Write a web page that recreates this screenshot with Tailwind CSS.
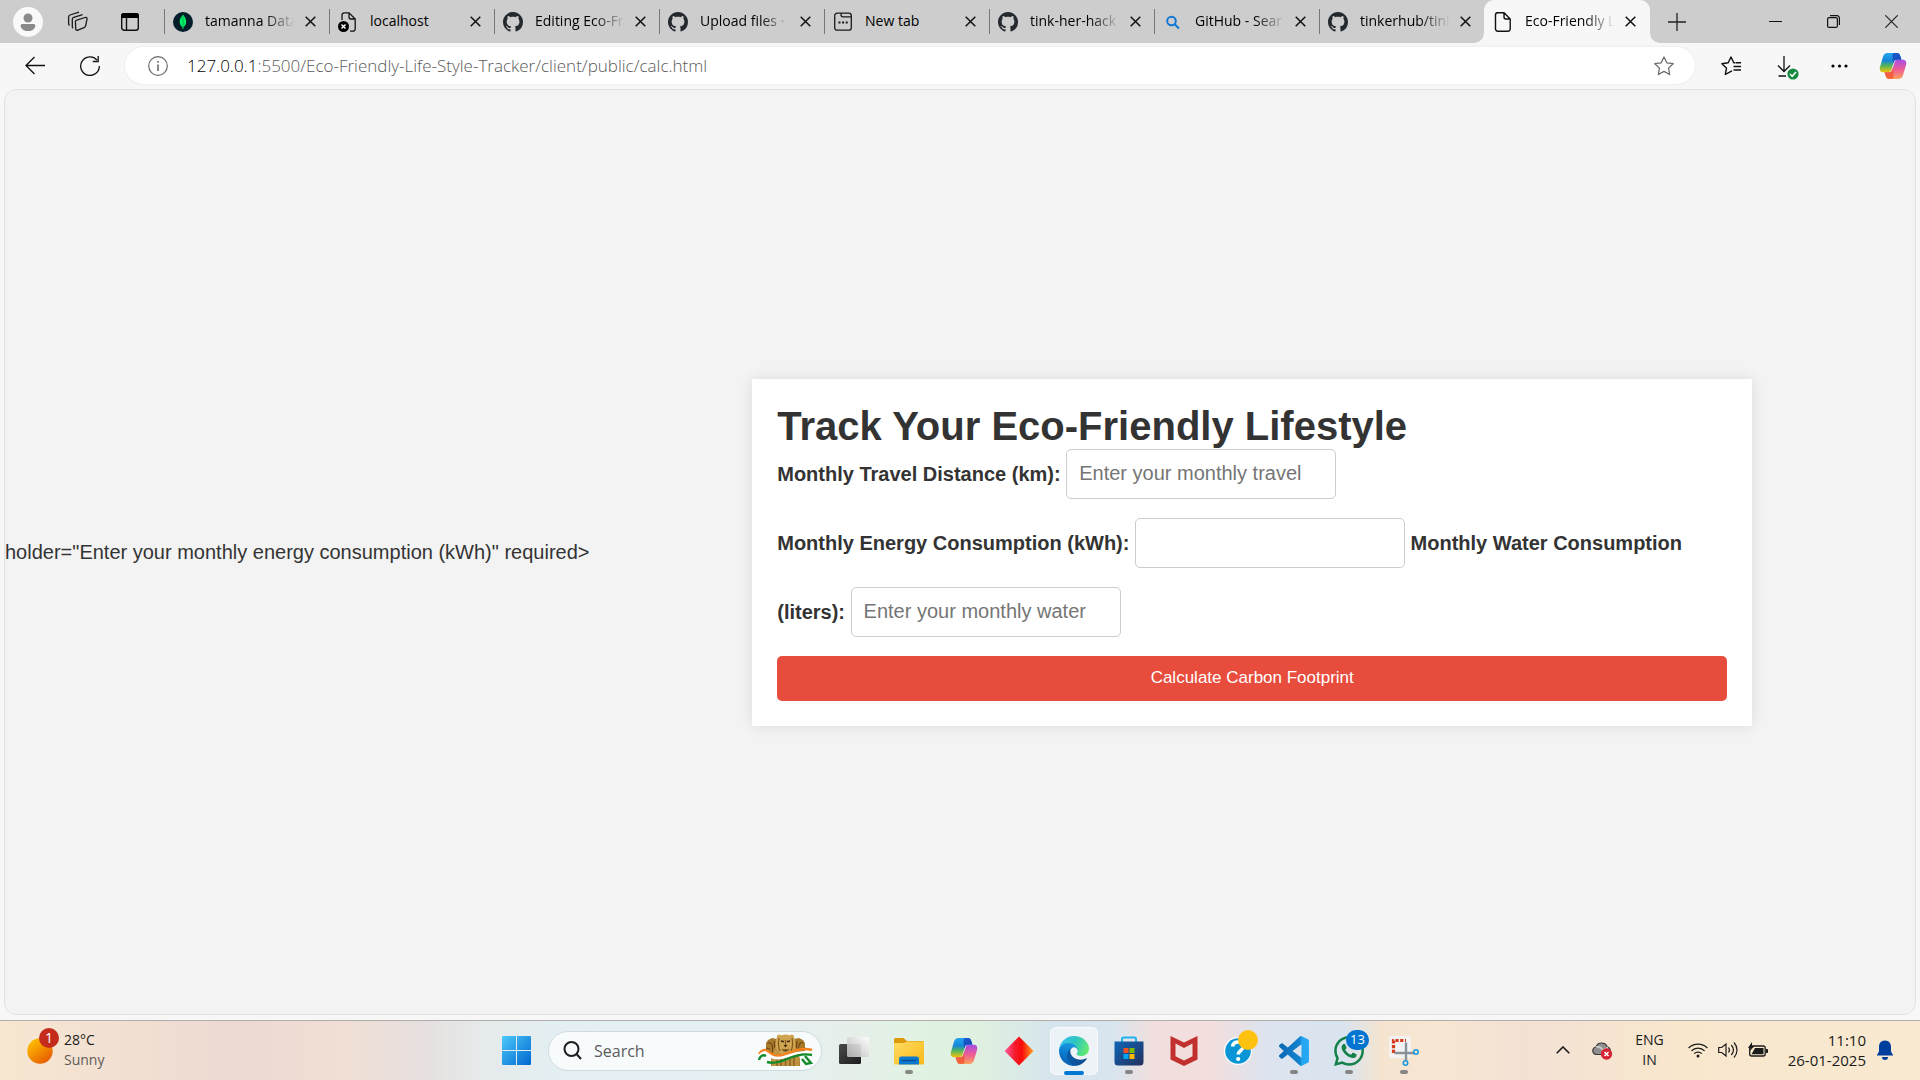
<!DOCTYPE html>
<html lang="en">
<head>
<meta charset="utf-8">
<title>Eco-Friendly Life Style Tracker</title>
<script src="https://cdn.jsdelivr.net/npm/@tailwindcss/browser@4"></script>
</head>
<body class="flex min-h-screen flex-col bg-[#f7f7f7] font-['Open_Sans',sans-serif] text-black">

<!-- shared icons -->
<svg class="absolute size-0" aria-hidden="true">
  <symbol id="github" viewBox="0 0 16 16"><path fill="#24292f" d="M8 0C3.58 0 0 3.58 0 8c0 3.54 2.29 6.53 5.47 7.59.4.07.55-.17.55-.38 0-.19-.01-.82-.01-1.49-2.01.37-2.53-.49-2.69-.94-.09-.23-.48-.94-.82-1.13-.28-.15-.68-.52-.01-.53.63-.01 1.08.58 1.23.82.72 1.21 1.87.87 2.33.66.07-.52.28-.87.51-1.07-1.78-.2-3.64-.89-3.64-3.95 0-.87.31-1.59.82-2.15-.08-.2-.36-1.02.08-2.12 0 0 .67-.21 2.2.82.64-.18 1.32-.27 2-.27s1.36.09 2 .27c1.53-1.04 2.2-.82 2.2-.82.44 1.1.16 1.92.08 2.12.51.56.82 1.27.82 2.15 0 3.07-1.87 3.75-3.65 3.95.29.25.54.73.54 1.48 0 1.07-.01 1.93-.01 2.2 0 .21.15.46.55.38A8.01 8.01 0 0 0 16 8c0-4.42-3.58-8-8-8z"/></symbol>
  <symbol id="x" viewBox="0 0 11 11"><path d="M.7.7l9.6 9.6M10.3.7L.7 10.3" stroke="#111" stroke-width="1.5" fill="none"/></symbol>
  <symbol id="copilot" viewBox="0 0 28 28">
    <path d="M8.500 1h9.500c1.800 0 2.600.9 3.100 2.500l1.400 4.300h-4.700c-1.600 0-2.500.8-3 2.400l-2.400 7.600c-.6 1.700-1.500 2.400-3.200 2.400H4C1.500 20.200.2 18 .9 15.200L4 4.700C4.800 2.200 6.200 1 8.500 1z" fill="url(#cpA)"/>
    <path d="M15 1h3c1.800 0 2.600.9 3.100 2.500l1.400 4.300h-4.700c-1.600 0-2.500.8-3 2.400l-.5 1.400-1-6.600C13.200 3 13.600 1 15 1z" fill="url(#cpC)"/>
    <path d="M19.500 27H10c-1.800 0-2.600-.9-3.100-2.500l-1.400-4.300h4.700c1.600 0 2.500-.8 3-2.400l2.400-7.600c.6-1.700 1.500-2.400 3.200-2.400H24c2.500 0 3.800 2.200 3.100 5L24 23.300c-.8 2.500-2.200 3.700-4.500 3.700z" fill="url(#cpB)"/>
    <path d="M12 27h-2c-1.800 0-2.600-.9-3.100-2.500l-1.400-4.300h4.700c1.600 0 2.500-.8 3-2.400l.8-2.400.6 7.100c.2 3-.8 4.500-2.600 4.500z" fill="#f2542d" opacity=".75"/>
  </symbol>
  <defs>
    <linearGradient id="cpA" x1="0" y1="0" x2="0" y2="1"><stop stop-color="#22a7f0"/><stop offset=".4" stop-color="#1686d9"/><stop offset=".65" stop-color="#4fb45f"/><stop offset="1" stop-color="#f1c40a"/></linearGradient>
    <linearGradient id="cpB" x1="0" y1="0" x2="0" y2="1"><stop stop-color="#a64de6"/><stop offset=".5" stop-color="#ee5c93"/><stop offset="1" stop-color="#fba35e"/></linearGradient>
    <linearGradient id="cpC" x1="0" y1="0" x2="1" y2="1"><stop stop-color="#1a5fd0"/><stop offset="1" stop-color="#1540b0"/></linearGradient>
  </defs>
</svg>

<!-- tab strip -->
<header class="flex h-[43px] items-stretch bg-[#cdcdcd] text-sm">
  <div class="flex w-[164px] shrink-0 items-center pl-[13px]">
    <button aria-label="Profile" class="flex size-[30px] items-center justify-center rounded-full bg-[#f9f9f9]">
      <svg class="size-[18px]" viewBox="0 0 18 18" fill="#8a8a8a"><circle cx="9" cy="5" r="4.500"/><path d="M3.500 11h11c1.200 0 1.800.7 1.800 1.700C16.300 15.600 13.200 18 9 18s-7.300-2.400-7.300-5.300c0-1 .6-1.700 1.800-1.700z"/></svg>
    </button>
    <button aria-label="Workspaces" class="ml-6">
      <svg class="size-[22px]" viewBox="0 0 22 22" fill="none" stroke="#1a1a1a" stroke-width="1.300"><path d="M9.800 9.200l8.200-2.700c1.400-.4 2.300.2 2 1.600l-1.300 6.600c-.2 1-.7 1.600-1.600 1.900l-6.300 2.500c-1.300.5-2.300-.2-2.100-1.500l-.3-7c0-.9.500-1.200 1.400-1.400z"/><path d="M6.200 17.200c-.6-.2-.9-.7-.9-1.500V8.300c0-1 .5-1.600 1.400-1.900l8.900-2.800M2.600 14.300c-.7-.2-1-.7-1-1.500V6c0-1 .5-1.700 1.400-2L12 1.200"/></svg>
    </button>
    <button aria-label="Tab actions" class="ml-8">
      <svg class="size-[18px]" viewBox="0 0 18 18"><rect x=".7" y=".7" width="16.600" height="16.600" rx="2.500" fill="none" stroke="#111" stroke-width="1.400"/><path d="M0 5V2.500A2.500 2.500 0 012.500 0h13A2.500 2.500 0 0118 2.500V5z"/><path d="M5.500 5v12" stroke="#111" stroke-width="1.400"/></svg>
    </button>
  </div>

  <div class="flex w-[165px] items-center pr-[13px]">
    <span class="h-[25px] w-px bg-[#777]"></span>
    <svg class="ml-2 size-5 shrink-0" viewBox="0 0 20 20"><circle cx="10" cy="10" r="10" fill="#021e2b"/><path d="M10 2.500c1.800 2.300 3.200 4.300 3.200 7.200 0 2.600-1.200 4.300-2.900 5.600L10.200 17h-.5l-.2-1.700c-1.600-1.300-2.800-3-2.800-5.600C6.700 6.800 8.300 4.800 10 2.500z" fill="#00ed64"/><path d="M10 3v14" stroke="#04a04a" stroke-width=".7"/></svg>
    <span class="ml-3 min-w-0 flex-1 overflow-hidden pb-0.5 whitespace-nowrap [mask-image:linear-gradient(to_right,black_66%,transparent)]">tamanna Data</span>
    <button aria-label="Close tab" class="ml-[10px]"><svg class="size-[11px]"><use href="#x"/></svg></button>
  </div>
  <div class="flex w-[165px] items-center pr-[13px]">
    <span class="h-[25px] w-px bg-[#777]"></span>
    <svg class="ml-2 size-5 shrink-0" viewBox="0 0 20 20"><path d="M4 8V3a2.200 2.200 0 012.200-2.200H11L17.200 7v10a2.200 2.200 0 01-2.200 2.200h-3M11 1v4a2 2 0 002 2h4" fill="none" stroke="#111" stroke-width="1.300"/><circle cx="5.500" cy="14.500" r="5.500"/><path d="M3.500 12.500l4 4m0-4l-4 4" stroke="#fff" stroke-width="1.400"/></svg>
    <span class="ml-3 min-w-0 flex-1 overflow-hidden pb-0.5 whitespace-nowrap">localhost</span>
    <button aria-label="Close tab" class="ml-[10px]"><svg class="size-[11px]"><use href="#x"/></svg></button>
  </div>
  <div class="flex w-[165px] items-center pr-[13px]">
    <span class="h-[25px] w-px bg-[#777]"></span>
    <svg class="ml-2 size-5 shrink-0"><use href="#github"/></svg>
    <span class="ml-3 min-w-0 flex-1 overflow-hidden pb-0.5 whitespace-nowrap [mask-image:linear-gradient(to_right,black_66%,transparent)]">Editing Eco-Fr</span>
    <button aria-label="Close tab" class="ml-[10px]"><svg class="size-[11px]"><use href="#x"/></svg></button>
  </div>
  <div class="flex w-[165px] items-center pr-[13px]">
    <span class="h-[25px] w-px bg-[#777]"></span>
    <svg class="ml-2 size-5 shrink-0"><use href="#github"/></svg>
    <span class="ml-3 min-w-0 flex-1 overflow-hidden pb-0.5 whitespace-nowrap [mask-image:linear-gradient(to_right,black_66%,transparent)]">Upload files · </span>
    <button aria-label="Close tab" class="ml-[10px]"><svg class="size-[11px]"><use href="#x"/></svg></button>
  </div>
  <div class="flex w-[165px] items-center pr-[13px]">
    <span class="h-[25px] w-px bg-[#777]"></span>
    <svg class="ml-2 size-5 shrink-0" viewBox="0 0 20 20" fill="none" stroke="#1a1a1a" stroke-width="1.300"><rect x="1.700" y="1.200" width="16.600" height="17" rx="2.500"/><path d="M8 1.200v1.600a2 2 0 002 2h8"/><path d="M5.500 10.500h2m1.600 0h2m1.600 0h2" stroke-width="2"/></svg>
    <span class="ml-3 min-w-0 flex-1 overflow-hidden pb-0.5 whitespace-nowrap">New tab</span>
    <button aria-label="Close tab" class="ml-[10px]"><svg class="size-[11px]"><use href="#x"/></svg></button>
  </div>
  <div class="flex w-[165px] items-center pr-[13px]">
    <span class="h-[25px] w-px bg-[#777]"></span>
    <svg class="ml-2 size-5 shrink-0"><use href="#github"/></svg>
    <span class="ml-3 min-w-0 flex-1 overflow-hidden pb-0.5 whitespace-nowrap [mask-image:linear-gradient(to_right,black_66%,transparent)]">tink-her-hack</span>
    <button aria-label="Close tab" class="ml-[10px]"><svg class="size-[11px]"><use href="#x"/></svg></button>
  </div>
  <div class="flex w-[165px] items-center pr-[13px]">
    <span class="h-[25px] w-px bg-[#777]"></span>
    <svg class="ml-2 size-5 shrink-0" viewBox="0 0 20 20" fill="none" stroke="#0f78d4" stroke-width="2"><circle cx="8.500" cy="9" r="4.300"/><path d="M11.700 12.200l4.300 4.300"/></svg>
    <span class="ml-3 min-w-0 flex-1 overflow-hidden pb-0.5 whitespace-nowrap [mask-image:linear-gradient(to_right,black_66%,transparent)]">GitHub - Sear</span>
    <button aria-label="Close tab" class="ml-[10px]"><svg class="size-[11px]"><use href="#x"/></svg></button>
  </div>
  <div class="flex w-[165px] items-center pr-[13px]">
    <span class="h-[25px] w-px bg-[#777]"></span>
    <svg class="ml-2 size-5 shrink-0"><use href="#github"/></svg>
    <span class="ml-3 min-w-0 flex-1 overflow-hidden pb-0.5 whitespace-nowrap [mask-image:linear-gradient(to_right,black_66%,transparent)]">tinkerhub/tinl</span>
    <button aria-label="Close tab" class="ml-[10px]"><svg class="size-[11px]"><use href="#x"/></svg></button>
  </div>
  <div class="relative flex w-[166px] items-center rounded-t-[10px] bg-[#f7f7f7] pr-[14px] pl-[9px]">
    <svg class="absolute bottom-0 -left-[10px] size-[10px]" viewBox="0 0 10 10"><path d="M10 0v10H0A10 10 0 0010 0z" fill="#f7f7f7"/></svg>
    <svg class="absolute -right-[10px] bottom-0 size-[10px]" viewBox="0 0 10 10"><path d="M0 0v10h10A10 10 0 010 0z" fill="#f7f7f7"/></svg>
    <svg class="size-5 shrink-0" viewBox="0 0 20 20" fill="none" stroke="#111" stroke-width="1.400"><path d="M4.500.8H11L17.200 7v10a2.200 2.200 0 01-2.200 2.200H4.700A2.200 2.200 0 012.500 17V3A2.200 2.200 0 014.500.8zM11 1v4a2 2 0 002 2h4"/></svg>
    <span class="ml-3 min-w-0 flex-1 overflow-hidden pb-0.5 whitespace-nowrap [mask-image:linear-gradient(to_right,black_66%,transparent)]">Eco-Friendly L</span>
    <button aria-label="Close tab" class="ml-[10px]"><svg class="size-[11px]"><use href="#x"/></svg></button>
  </div>
  <button aria-label="New tab" class="ml-[18px]"><svg class="size-[18px]" viewBox="0 0 18 18" stroke="#222" stroke-width="1.300"><path d="M9 0v18M0 9h18"/></svg></button>
  <div class="ml-auto flex">
    <button aria-label="Minimize" class="flex w-[58px] items-center justify-center"><svg class="size-[13px]" viewBox="0 0 13 13" stroke="#111"><path d="M0 6.500h13"/></svg></button>
    <button aria-label="Restore" class="flex w-[58px] items-center justify-center"><svg class="size-[13px]" viewBox="0 0 13 13" fill="none" stroke="#111" stroke-width="1.200"><rect x=".6" y="2.600" width="9.800" height="9.800" rx="1.500"/><path d="M3 .6h7a2.400 2.400 0 012.400 2.400v7"/></svg></button>
    <button aria-label="Close" class="flex w-[58px] items-center justify-center"><svg class="size-[13px]" viewBox="0 0 13 13" stroke="#222" stroke-width="1.200"><path d="M.3.300l12.400 12.400M12.700.3L.3 12.700"/></svg></button>
  </div>
</header>

<!-- toolbar -->
<nav class="flex h-[45px] items-center pl-[25px]">
  <button aria-label="Back"><svg class="size-5" viewBox="0 0 20 20" fill="none" stroke="#111" stroke-width="1.300"><path d="M20 9.500H1M9.500 1L1 9.500 9.500 18"/></svg></button>
  <button aria-label="Refresh" class="ml-[35px]"><svg class="size-5" viewBox="0 0 20 20" fill="none" stroke="#111" stroke-width="1.300"><path d="M19.300 10A9.300 9.300 0 1117 4M18.200 0v5.500h-5.500"/></svg></button>
  <div class="ml-[25px] flex h-[37px] flex-1 items-center rounded-full bg-white pr-[21px] pl-[23px] shadow-[0_0_3px_rgba(0,0,0,0.08)]">
    <svg class="size-5 shrink-0" viewBox="0 0 20 20" fill="none" stroke="#6b6b6b" stroke-width="1.200"><circle cx="10" cy="10" r="9.300"/><path d="M10 8.500V15M10 5v1.800" stroke-width="1.600"/></svg>
    <span class="ml-[19px] flex-1 text-[17px] leading-6 font-light whitespace-nowrap text-[#5a5a5a]"><span class="text-black">127.0.0.1</span>:5500/Eco-Friendly-Life-Style-Tracker/client/public/calc.html</span>
    <button aria-label="Add to favorites"><svg class="size-5 shrink-0" viewBox="0 0 20 20" fill="none" stroke="#6b6b6b" stroke-width="1.300" stroke-linejoin="round"><path d="M10 1l2.800 5.800 6.400.9-4.700 4.400 1.200 6.400L10 15.400l-5.700 3.100 1.200-6.400L.8 7.700l6.400-.9z"/></svg></button>
  </div>
  <div class="ml-[9px] flex">
    <button aria-label="Favorites" class="flex w-[54px] items-center justify-center"><svg class="size-5" viewBox="0 0 20 20" fill="none" stroke="#111" stroke-width="1.400" stroke-linejoin="round"><path d="M14 6.800h-1.200L10 1 7.200 6.800l-6.400.9 4.700 4.400-1.200 6.400L10 15.400M12.500 10.500H20M12.500 14H20M14.500 6.800H20M10 15.400l1-.5"/></svg></button>
    <button aria-label="Downloads" class="flex w-[54px] items-center justify-center pl-1"><svg class="h-[26px] w-5 overflow-visible" viewBox="0 0 20 26" fill="none" stroke="#111" stroke-width="1.300"><path d="M7 3v15M1 12.500l6 6 6-6M1.500 23H9"/><circle cx="16" cy="21" r="5.600" fill="#168a3c" stroke="none"/><path d="M13 21l2.200 2.300 3.800-4.200" stroke="#fff" stroke-width="1.500"/></svg></button>
    <button aria-label="Settings and more" class="flex w-[54px] items-center justify-center"><svg class="h-1 w-[17px]" viewBox="0 0 17 4"><circle cx="2" cy="2" r="1.600"/><circle cx="8.500" cy="2" r="1.600"/><circle cx="15" cy="2" r="1.600"/></svg></button>
    <button aria-label="Copilot" class="flex w-[54px] items-center justify-center"><svg class="size-7"><use href="#copilot"/></svg></button>
  </div>
</nav>

<!-- page -->
<main class="mx-1 mt-px mb-[5px] flex flex-1 items-center overflow-hidden rounded-xl border border-[#e2e2e2] bg-[#f3f3f3] font-['Liberation_Sans',Arial,sans-serif] text-xl text-[#333]">
  <p class="whitespace-nowrap">holder="Enter your monthly energy consumption (kWh)" required&gt;</p>
  <section class="mx-auto w-full max-w-[1000px] bg-white p-[25px] shadow-[0_0_13px_rgba(0,0,0,0.1)]">
    <h1 class="text-[40px] leading-[45px] font-bold">Track Your Eco-Friendly Lifestyle</h1>
    <form>
      <label for="travel" class="font-bold">Monthly Travel Distance (km):</label>
      <input id="travel" type="text" placeholder="Enter your monthly travel" class="mb-[19px] h-[50px] w-[270px] rounded-[5px] border border-[#ccc] bg-white px-3 placeholder:text-[#757575]">
      <br>
      <label for="energy" class="font-bold">Monthly Energy Consumption (kWh):</label>
      <input id="energy" type="text" class="mb-[19px] h-[50px] w-[270px] rounded-[5px] border border-[#ccc] bg-white px-3">
      <label for="water" class="font-bold">Monthly Water Consumption (liters):</label>
      <input id="water" type="text" placeholder="Enter your monthly water" class="mb-[19px] h-[50px] w-[270px] rounded-[5px] border border-[#ccc] bg-white px-3 placeholder:text-[#757575]">
      <button type="button" class="block h-[45px] w-full rounded-[5px] bg-[#e74c3c] text-[17px] text-white">Calculate Carbon Footprint</button>
    </form>
  </section>
</main>

<!-- taskbar -->
<footer class="grid h-[60px] grid-cols-[1fr_auto_1fr] border-t border-[#b0aeaa] bg-[linear-gradient(to_right,#f6e7d0_0%,#f2e0d3_6%,#ecdad3_12.500%,#f0dfd4_18%,#e6dfdf_22%,#e6eaea_25%,#e3eff3_29%,#e5f0f3_39%,#e6efea_44%,#e0f2e2_48%,#dff0e0_51%,#d6e4ed_55%,#d9e5ee_58%,#f0dfde_60%,#f3dedd_63%,#dce4ef_66%,#d9e4ef_70%,#f5e4cf_72%,#f7e6d1_75%,#f3e1d5_79.500%,#f8e7cd_87%,#f8e9d0_100%)] text-sm">
  <div class="flex items-center pb-0.5 pl-[27px]">
    <div class="relative h-9 w-9">
      <svg class="absolute top-1.5 left-0 size-[26px]" viewBox="0 0 26 26"><defs><linearGradient id="sun" x1=".1" y1="0" x2=".9" y2="1"><stop stop-color="#ffc800"/><stop offset="1" stop-color="#e65100"/></linearGradient></defs><circle cx="13" cy="13" r="12.700" fill="url(#sun)"/></svg>
      <span class="absolute -top-1 left-3 flex size-5 items-center justify-center rounded-full bg-[#c42b1c] text-sm text-white">1</span>
    </div>
    <div class="ml-px leading-5 text-[#1b1b1b]"><div>28°C</div><div class="text-[#5f5b57]">Sunny</div></div>
  </div>

  <div class="flex items-center">
    <button aria-label="Start" class="flex w-[55px] justify-center"><svg class="size-[29px]" viewBox="0 0 29 29"><defs><linearGradient id="win" x1="0" y1="0" x2="1" y2="1"><stop stop-color="#4cc9fb"/><stop offset="1" stop-color="#0067ce"/></linearGradient></defs><path fill="url(#win)" d="M1 0h13v14H0V1a1 1 0 011-1zM15 0h13a1 1 0 011 1v13H15zM0 15h14v14H1a1 1 0 01-1-1zM15 15h14v13a1 1 0 01-1 1H15z"/></svg></button>
    <label class="mx-1 flex h-10 w-[274px] items-center rounded-full border border-[#d0dbe0] bg-[#f8fbfc] pr-2 pl-[14px]">
      <svg class="size-[19px] shrink-0" viewBox="0 0 19 19" fill="none" stroke="#1f1f1f" stroke-width="2"><circle cx="8.500" cy="8" r="7"/><path d="M13.500 13l4.500 5"/></svg>
      <input type="text" aria-label="Search" placeholder="Search" class="ml-3 w-0 flex-1 bg-transparent text-base placeholder:text-[#5c5c5c]">
      <svg class="h-[33px] w-[55px] shrink-0" viewBox="0 0 55 33">
        <path d="M8 9l2-3 4-2 5 1 3 4v23h-9c0-5 0-8 1-10l-6-4z" fill="#a87a2c"/>
        <path d="M47 9l-2-3-4-2-5 1-3 4v23h9c0-5 0-8-1-10l6-4z" fill="#a87a2c"/>
        <path d="M10 9c2-1 3 0 4 2s0 6 1 9M16 7c1 4 0 9 2 14M45 9c-2-1-3 0-4 2s0 6-1 9M39 7c-1 4 0 9-2 14M8 14l4 1M47 14l-4 1" stroke="#6f4a15" stroke-width="1.200" fill="none"/>
        <path d="M18 12c-4 6-5 13-4 20h27c1-7 0-14-4-20z" fill="#c0913f"/>
        <path d="M19 3c0-3 3-3 4-1.500 3-1.300 6-1.300 9 0C33 0 36 0 36 3c2 4 2 9 0 13-2 3-5 5-8.500 5S21 19 19 16c-2-4-2-9 0-13z" fill="#d0a551"/>
        <path d="M21 4c-1 5-1 9 1 13M34 4c1 5 1 9-1 13M24 15c2 3 5 3 7 0M27.500 6v5M19 23v9M23 25v7M32 25v7M36 23v9M27.500 21v11" stroke="#80591d" stroke-width="1.200" fill="none"/>
        <path d="M23 7l3 .7M32 7l-3 .7" stroke="#3d270a" stroke-width="1.500"/><path d="M25.500 11h4l-2 2.500zM25 15.500h5l-2.500 1.500z" fill="#3d270a"/>
        <path d="M1 20c3-4 5-5 8-3 5 5 11 6 19 3 8-3 17-7 26-4" stroke="#f58220" stroke-width="2.600" fill="none"/>
        <path d="M1 22.500c3-4 5-5 8-3 5 5 11 6 19 3 8-3 17-6 26-3.500" stroke="#fff" stroke-width="2.600" fill="none"/>
        <path d="M1 26c1-4 4-6 7-4M9 28c6 2 13 0 20-3s16-6 25-4M47 22l6 7-5 1-4-5" stroke="#128a2c" stroke-width="2.400" fill="none"/>
      </svg>
    </label>
    <button aria-label="Task view" class="flex w-[55px] justify-center"><svg class="size-[30px]" viewBox="0 0 30 30"><defs><linearGradient id="tv" x1="0" y1="0" x2="1" y2="1"><stop stop-color="#4a4a4a"/><stop offset="1" stop-color="#1c1c1c"/></linearGradient><linearGradient id="tw" x1="1" y1="0" x2="0" y2="1"><stop stop-color="#fff"/><stop offset="1" stop-color="#b5b5b5"/></linearGradient></defs><rect y="8" width="22" height="20" rx="1.500" fill="url(#tv)"/><rect x="8" y="1" width="22" height="20" rx="1.500" fill="url(#tw)" opacity=".92"/></svg></button>
    <button aria-label="File Explorer" class="relative flex w-[55px] justify-center"><svg class="size-[30px]" viewBox="0 0 30 30"><defs><linearGradient id="fo" x1="0" y1="0" x2="1" y2="1"><stop stop-color="#ffdb64"/><stop offset="1" stop-color="#f9b916"/></linearGradient></defs><path d="M0 3.500A1.500 1.500 0 011.500 2h8L13 5h15.500A1.500 1.500 0 0130 6.500V12H0z" fill="#dd9a0b"/><path d="M0 7h10l3-1.500h17V27a1.500 1.500 0 01-1.500 1.500h-27A1.500 1.500 0 010 27z" fill="url(#fo)"/><path d="M5 28.500V23a2.500 2.500 0 012.500-2.500h15A2.500 2.500 0 0125 23v5.500z" fill="#0b78d0"/><path d="M8 24.500h14" stroke="#064a8c" stroke-width="1.300"/></svg><span class="absolute -bottom-2 h-1 w-2 rounded-full bg-[#858a83]"></span></button>
    <button aria-label="Copilot" class="flex w-[55px] justify-center"><svg class="size-7"><use href="#copilot"/></svg></button>
    <button aria-label="Diamond" class="flex w-[55px] justify-center"><svg class="size-[30px]" viewBox="0 0 30 30"><defs><linearGradient id="di"><stop stop-color="#ff5fa0"/><stop offset=".35" stop-color="#f41b30"/><stop offset=".6" stop-color="#fa0a0a"/><stop offset="1" stop-color="#ffa51f"/></linearGradient></defs><path d="M15 .5L29.500 15 15 29.500.5 15z" fill="url(#di)"/></svg></button>
    <button aria-label="Microsoft Edge" class="relative flex h-12 w-[55px] items-center justify-center"><span class="flex size-12 items-center justify-center rounded-md border border-white/60 bg-white/55"><svg class="size-[30px]" viewBox="0 0 256 256"><defs><linearGradient id="e1" x1=".2" y1=".5" x2="1" y2=".5"><stop stop-color="#0c59a4"/><stop offset="1" stop-color="#114a8b"/></linearGradient><linearGradient id="e2" x1=".6" y1="0" x2=".3" y2="1"><stop stop-color="#1b9de2"/><stop offset=".5" stop-color="#0b7cd0"/><stop offset="1" stop-color="#0a5bb0"/></linearGradient><linearGradient id="e3" x1="0" y1=".3" x2="1" y2=".6"><stop stop-color="#35c1f1"/><stop offset=".5" stop-color="#2dc5c0"/><stop offset="1" stop-color="#66eb6e"/></linearGradient></defs><g transform="translate(-4.630 -4.920)"><path fill="url(#e1)" d="M235.680 195.460a93.730 93.730 0 01-10.540 4.710 101.870 101.870 0 01-35.900 6.460c-47.320 0-88.540-32.550-88.540-74.320A31.480 31.480 0 01117.130 105c-42.800 1.800-53.800 46.400-53.800 72.530 0 73.880 68.090 81.370 82.760 81.370 7.910 0 19.840-2.300 27-4.560l1.310-.44a128.340 128.340 0 0066.600-52.800 4 4 0 00-5.320-5.640z"/><path fill="url(#e2)" d="M110.340 246.340A79.200 79.200 0 0187.600 225a80.720 80.720 0 0129.530-120c3.120-1.470 8.450-4.130 15.540-4a32.350 32.350 0 0125.690 13 31.880 31.880 0 016.360 18.660c0-.21 24.460-79.600-80-79.600-43.900 0-80 41.660-80 78.210a130.150 130.150 0 0012.110 56 128 128 0 00156.380 67.110 75.550 75.550 0 01-62.780-8z"/><path fill="url(#e3)" d="M156.940 153.780c-.81 1.050-3.300 2.500-3.300 5.660 0 2.610 1.700 5.120 4.720 7.230 14.380 10 41.490 8.680 41.560 8.680a59.560 59.560 0 0030.270-8.350 61.380 61.380 0 0030.430-52.880c.26-22.410-8-37.310-11.340-43.910-21.190-41.450-66.930-65.290-116.670-65.290a128 128 0 00-128 126.200c.48-36.540 36.800-66.050 80-66.050 3.500 0 23.460.34 42 10.070 16.340 8.580 24.900 18.940 30.850 29.210 6.180 10.670 7.280 24.150 7.280 29.520s-2.740 13.330-7.800 19.910z"/></g></svg></span><span class="absolute bottom-0 h-1 w-5 rounded-full bg-[#0078d4]"></span></button>
    <button aria-label="Microsoft Store" class="relative flex w-[55px] justify-center"><svg class="size-[30px]" viewBox="0 0 30 30"><defs><linearGradient id="st" x1="0" y1="0" x2="1" y2="1"><stop stop-color="#0d66b8"/><stop offset="1" stop-color="#25305c"/></linearGradient></defs><path d="M8 6V3a1.500 1.500 0 011.500-1.500h11A1.500 1.500 0 0122 3v3" fill="none" stroke="#1fb3ee" stroke-width="2"/><path d="M.5 5.500h29V26a3.500 3.500 0 01-3.500 3.500H4A3.500 3.500 0 01.5 26z" fill="url(#st)"/><path fill="#f25022" d="M9.500 12H14.500v5h-5z"/><path fill="#7fba00" d="M15.500 12h5v5h-5z"/><path fill="#00a4ef" d="M9.500 18h5v5h-5z"/><path fill="#ffb900" d="M15.500 18h5v5h-5z"/></svg><span class="absolute -bottom-2 h-1 w-2 rounded-full bg-[#858585]"></span></button>
    <button aria-label="McAfee" class="flex w-[55px] justify-center"><svg class="size-[30px]" viewBox="0 0 30 30"><path fill-rule="evenodd" d="M1.500 0L15 6.500 28.500 0v23.500L15 30 1.500 23.500zM6.500 7.500v12.800L15 24.500l8.500-4.200V7.500L15 12z" fill="#c22f2f"/></svg></button>
    <button aria-label="Help" class="relative flex w-[55px] justify-center"><svg class="size-[30px]" viewBox="0 0 30 30"><circle cx="14" cy="15" r="14" fill="#fff"/><circle cx="14" cy="15" r="12.800" fill="#0a96d6"/><path d="M8.500 10.500C9 7.500 11.300 6 14 6c3 0 5.300 1.600 5.300 4.500 0 3.800-5 4-5 8" fill="none" stroke="#fff" stroke-width="3.500"/><circle cx="14.200" cy="23" r="2.100" fill="#fff"/></svg><span class="absolute -top-1.5 right-2 size-5 rounded-full bg-[#ffc20e]"></span></button>
    <button aria-label="Visual Studio Code" class="relative flex w-[55px] justify-center"><svg class="size-[30px]" viewBox="0 0 24 24"><defs><linearGradient id="vs"><stop offset=".1" stop-color="#0b6cb8"/><stop offset=".7" stop-color="#1383cf"/><stop offset=".76" stop-color="#23a5f0"/><stop offset="1" stop-color="#2aaaf5"/></linearGradient></defs><path fill="url(#vs)" d="M23.150 2.587L18.210.21a1.494 1.494 0 0 0-1.705.29l-9.460 8.630-4.120-3.128a.999.999 0 0 0-1.276.057L.327 7.261A1 1 0 0 0 .326 8.740L3.899 12 .326 15.260a1 1 0 0 0 .001 1.479L1.650 17.940a.999.999 0 0 0 1.276.057l4.120-3.128 9.460 8.630a1.492 1.492 0 0 0 1.704.29l4.942-2.377A1.500 1.500 0 0 0 24 20.060V3.939a1.500 1.500 0 0 0-.85-1.352zm-5.146 14.861L10.826 12l7.178-5.448v10.896z"/></svg><span class="absolute -bottom-2 h-1 w-2 rounded-full bg-[#858585]"></span></button>
    <button aria-label="WhatsApp" class="relative flex w-[55px] justify-center"><svg class="size-[30px]" viewBox="0 0 24 24"><path fill="#14804a" d="M17.472 14.382c-.297-.149-1.758-.867-2.030-.967-.273-.099-.471-.148-.67.150-.197.297-.767.966-.94 1.164-.173.199-.347.223-.644.075-.297-.150-1.255-.463-2.390-1.475-.883-.788-1.480-1.761-1.653-2.059-.173-.297-.018-.458.130-.606.134-.133.298-.347.446-.520.149-.174.198-.298.298-.497.099-.198.050-.371-.025-.520-.075-.149-.669-1.612-.916-2.207-.242-.579-.487-.5-.669-.510-.173-.008-.371-.010-.570-.010-.198 0-.520.074-.792.372-.272.297-1.040 1.016-1.040 2.479 0 1.462 1.065 2.875 1.213 3.074.149.198 2.096 3.200 5.077 4.487.709.306 1.262.489 1.694.625.712.227 1.360.195 1.871.118.571-.085 1.758-.719 2.006-1.413.248-.694.248-1.289.173-1.413-.074-.124-.272-.198-.570-.347m-5.421 7.403h-.004a9.870 9.870 0 01-5.031-1.378l-.361-.214-3.741.982.998-3.648-.235-.374a9.860 9.860 0 01-1.510-5.260c.001-5.450 4.436-9.884 9.888-9.884 2.640 0 5.122 1.030 6.988 2.898a9.825 9.825 0 012.893 6.994c-.003 5.450-4.437 9.884-9.885 9.884m8.413-18.297A11.815 11.815 0 0012.050 0C5.495 0 .16 5.335.157 11.892c0 2.096.547 4.142 1.588 5.945L.057 24l6.305-1.654a11.882 11.882 0 005.683 1.448h.005c6.554 0 11.890-5.335 11.893-11.893a11.821 11.821 0 00-3.480-8.413z"/></svg><span class="absolute -top-1.5 right-[7px] flex h-5 w-[23px] items-center justify-center rounded-full bg-[#0074d1] text-[13px] text-white">13</span><span class="absolute -bottom-2 h-1 w-2 rounded-full bg-[#858585]"></span></button>
    <button aria-label="Snipping Tool" class="relative flex w-[55px] justify-center"><svg class="size-[30px]" viewBox="0 0 30 30"><rect width="22" height="22" rx="2" fill="#f3f3f3"/><path d="M4.500 17V4.500H17" fill="none" stroke="#d83b1a" stroke-width="3.200" stroke-dasharray="3.200 1.600"/><path d="M17 6.500v18M5.500 17h20" stroke="#8a9299" stroke-width="2.400"/><circle cx="16.500" cy="27" r="2.200" fill="none" stroke="#1a9be0" stroke-width="1.600"/><circle cx="27" cy="16" r="2.200" fill="none" stroke="#1a9be0" stroke-width="1.600"/></svg><span class="absolute -bottom-2 h-1 w-2 rounded-full bg-[#858585]"></span></button>
  </div>

  <div class="flex items-center justify-end pr-[27px] pb-0.5 text-[#1b1b1b]">
    <button aria-label="Show hidden icons"><svg class="h-2 w-[14px]" viewBox="0 0 14 8" fill="none" stroke="#1b1b1b" stroke-width="1.600"><path d="M.7 7.300L7 1l6.300 6.300"/></svg></button>
    <svg class="ml-[22px] h-5 w-[21px]" viewBox="0 0 21 20"><path d="M5 14.500C2.500 14.500.8 13 .8 10.700c0-2 1.400-3.400 3.200-3.700C4.800 4.300 7 3 9.500 3c2.800 0 5 1.500 5.700 4 2 .3 3 1.800 3 3.600 0 2.500-1.700 3.900-4 3.900z" fill="#8f8f8f" stroke="#3a3a3a" stroke-width="1.200"/><path d="M4 7c3-.5 5 0 7 3l5-2.500" fill="none" stroke="#ccc" stroke-width="1.500"/><circle cx="14.500" cy="14" r="5.700" fill="#d92332"/><path d="M12.500 12l4 4m0-4l-4 4" stroke="#fff" stroke-width="1.500"/></svg>
    <div class="ml-[22px] text-center leading-5"><div>ENG</div><div>IN</div></div>
    <svg class="ml-6 h-4 w-5" viewBox="0 0 20 16" fill="none" stroke="#1b1b1b" stroke-width="1.300"><path d="M.6 6a13.300 13.300 0 0118.800 0M3.400 8.900a9.300 9.300 0 0113.200 0M6.200 11.600a5.400 5.400 0 017.600 0"/><circle cx="10" cy="14" r="1.500" fill="#1b1b1b" stroke="none"/></svg>
    <svg class="ml-[10px] h-[18px] w-5" viewBox="0 0 20 18" fill="none" stroke="#1b1b1b" stroke-width="1.200"><path d="M.7 6.500h3L8 3v12l-4.300-3.500h-3z"/><path d="M10.500 6.500c1.200 1.500 1.200 3.500 0 5M13.300 4c2.600 3 2.600 7 0 10M16 1.500c4 4.500 4 10.500 0 15"/></svg>
    <svg class="ml-[10px] h-4 w-5" viewBox="0 0 20 16"><rect x="1.700" y="4" width="15.500" height="10" rx="2" fill="none" stroke="#1b1b1b" stroke-width="1.300"/><path d="M7 6h8.500v6.200H3.500zM18 7h1.200a.8.800 0 01.8.800v2.400a.8.800 0 01-.8.800H18zM4 0L0 6h2.500L1.500 9.500 6.500 4H4z" fill="#1b1b1b"/></svg>
    <div class="ml-5 text-right text-[15px] leading-5"><div>11:10</div><div>26-01-2025</div></div>
    <svg class="ml-[11px] h-5 w-4" viewBox="0 0 16 20" fill="#003f9e"><path d="M8 .5c3.800 0 6 2.800 6 6.200v4.800l2 3.500v.5H0V15l2-3.500V6.700C2 3.300 4.200.5 8 .5zM5 17h6a3 3 0 01-6 0z"/></svg>
  </div>
</footer>
</body>
</html>
